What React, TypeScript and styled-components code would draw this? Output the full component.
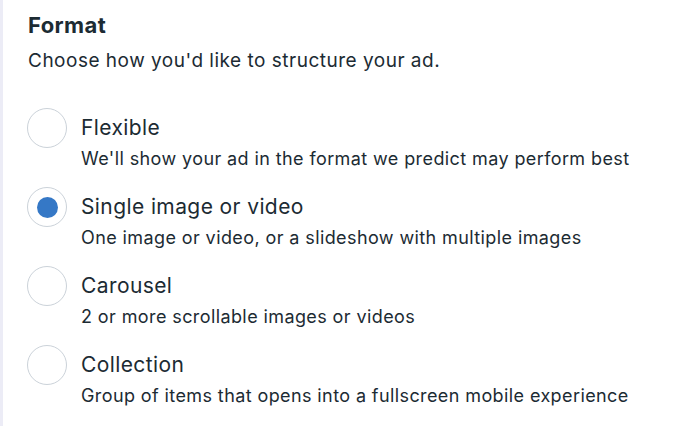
import React, { useState } from 'react'
import styled, { createGlobalStyle } from 'styled-components'

const GlobalStyle = createGlobalStyle`
  html, body {
    margin: 0;
    padding: 0;
    background: #ffffff;
  }
  body {
    font-family: Inter, "Noto Sans", "Liberation Sans", sans-serif;
    color: #1c2b33;
  }
`

const Panel = styled.section`
  box-sizing: border-box;
  width: 700px;
  height: 426px;
  border-left: 3px solid #ececf6;
  padding: 13px 0 0 25px;
`

const Heading = styled.h2`
  margin: 0;
  font-size: 22px;
  line-height: 24px;
  font-weight: 700;
  letter-spacing: 0.4px;
`

const Intro = styled.p`
  margin: 12px 0 0;
  font-size: 19px;
  line-height: 24px;
  letter-spacing: 0.5px;
`

const OptionList = styled.div`
  display: flex;
  flex-direction: column;
  gap: 17px;
  margin: 35px 0 0 -1px;
`

const OptionRow = styled.label`
  display: flex;
  align-items: flex-start;
  gap: 14px;
  cursor: pointer;
`

const RadioCircle = styled.span<{ $checked: boolean }>`
  box-sizing: border-box;
  flex: none;
  width: 40px;
  height: 40px;
  border-radius: 50%;
  border: 1.5px solid #cbd2d9;
  display: flex;
  align-items: center;
  justify-content: center;

  &::after {
    content: '';
    width: 21px;
    height: 21px;
    border-radius: 50%;
    background: #3578c6;
    display: ${(p) => (p.$checked ? 'block' : 'none')};
  }
`

const OptionText = styled.div`
  display: flex;
  flex-direction: column;
`

const OptionLabel = styled.span`
  font-size: 21px;
  line-height: 40px;
  letter-spacing: 0.4px;
`

const OptionHint = styled.span`
  font-size: 18px;
  line-height: 22px;
  letter-spacing: 0.4px;
`

const options = [
  { id: 'flexible', label: 'Flexible', hint: "We'll show your ad in the format we predict may perform best" },
  { id: 'single', label: 'Single image or video', hint: 'One image or video, or a slideshow with multiple images' },
  { id: 'carousel', label: 'Carousel', hint: '2 or more scrollable images or videos' },
  { id: 'collection', label: 'Collection', hint: 'Group of items that opens into a fullscreen mobile experience' },
]

export default function App() {
  const [format, setFormat] = useState('single')

  return (
    <>
      <GlobalStyle />
      <Panel>
        <Heading>Format</Heading>
        <Intro>Choose how you'd like to structure your ad.</Intro>
        <OptionList role="radiogroup">
          {options.map((o) => (
            <OptionRow key={o.id} onClick={() => setFormat(o.id)}>
              <RadioCircle $checked={format === o.id} role="radio" aria-checked={format === o.id} />
              <OptionText>
                <OptionLabel>{o.label}</OptionLabel>
                <OptionHint>{o.hint}</OptionHint>
              </OptionText>
            </OptionRow>
          ))}
        </OptionList>
      </Panel>
    </>
  )
}
